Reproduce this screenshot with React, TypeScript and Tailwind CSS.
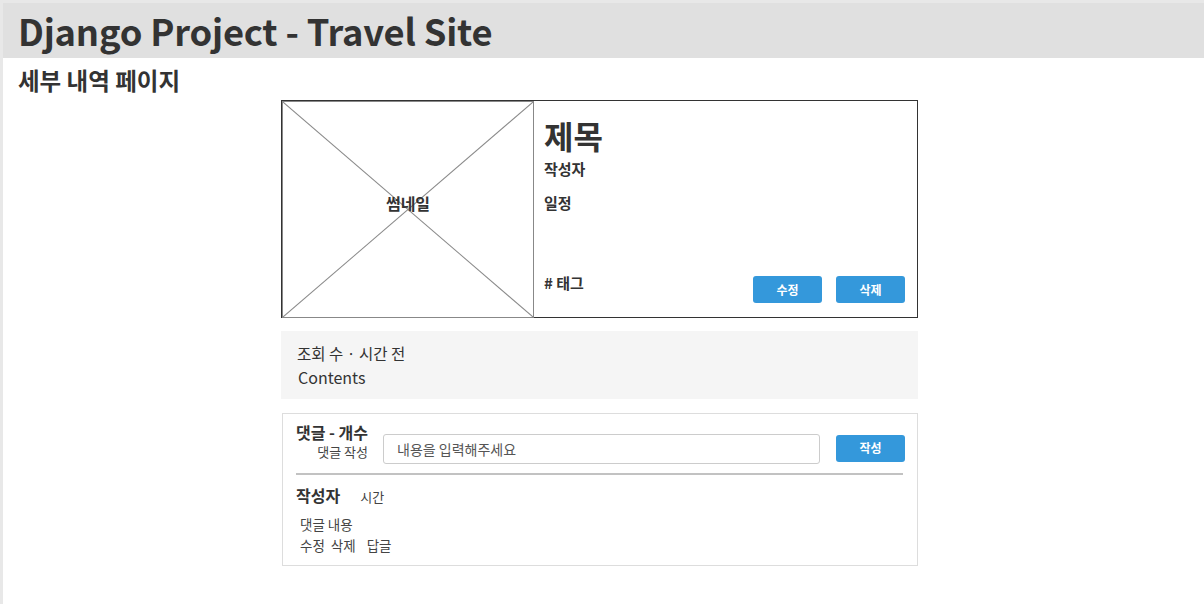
import React from "react"

const font = { fontFamily: '"Noto Sans CJK KR", "Noto Sans", sans-serif' }

const Thumbnail = () => {
	return (
		<div className="relative w-[252px] h-[217px] border border-[#888] flex items-center justify-center shrink-0">
			<svg className="absolute inset-0" width="100%" height="100%" preserveAspectRatio="none" viewBox="0 0 100 100">
				<line x1="0" y1="0" x2="100" y2="100" stroke="#8a8a8a" strokeWidth="1" vectorEffect="non-scaling-stroke" />
				<line x1="100" y1="0" x2="0" y2="100" stroke="#8a8a8a" strokeWidth="1" vectorEffect="non-scaling-stroke" />
			</svg>
			<span className="relative text-[16px] font-bold text-[#333] mb-[14px]">썸네일</span>
		</div>
	)
}

const BlueButton = ({ label }: { label: string }) => {
	return (
		<button className="w-[69px] h-[27px] rounded-[3px] bg-[#3498db] text-white text-[12px] font-bold leading-none">
			{label}
		</button>
	)
}

export default function App() {
	return (
		<div style={font} className="min-h-[604px] bg-[#e8e8e8] pl-[3px] pt-[3px] text-[#333]">
			<div className="bg-white min-h-[601px]">
				<div className="bg-[#e0e0e0] h-[55px] flex items-center pl-[15px]">
					<h1 className="text-[36.3px] font-bold leading-none tracking-[-0.2px]">Django Project - Travel Site</h1>
				</div>
				<h2 className="pl-[15px] pt-[7px] text-[23.5px] font-bold leading-[30px]">세부 내역 페이지</h2>

				<div className="w-[637px] ml-[278px] mt-[5px]">
					<div className="flex border border-[#333] h-[218px]">
						<Thumbnail />
						<div className="flex-1 flex flex-col pl-[10px] pr-[12px] pt-[14px] pb-[14px]">
							<div className="text-[32px] font-bold leading-[40px]">제목</div>
							<div className="text-[15px] font-bold mt-[4px] leading-[20px]">작성자</div>
							<div className="text-[15px] font-bold mt-[14px] leading-[20px]">일정</div>
							<div className="mt-auto flex items-end justify-between">
								<div className="text-[15px] font-bold leading-[20px] mb-[10px]">
									# 태그
								</div>
								<div className="flex gap-[14px]">
									<BlueButton label="수정" />
									<BlueButton label="삭제" />
								</div>
							</div>
						</div>
					</div>

					<div className="mt-[13px] h-[68px] bg-[#f5f5f5] pl-[16px] pt-[11px]">
						<div className="text-[15.5px] leading-[22px]">조회 수 · 시간 전</div>
						<div className="text-[16px] leading-[24px] mt-[1px] pl-[1px]">Contents</div>
					</div>

					<div className="mt-[14px] ml-[1px] border border-[#ddd] h-[153px] px-[13px] pt-[9px]">
						<div className="flex items-start">
							<div className="flex flex-col items-end w-[74px]">
								<div className="text-[16px] font-bold leading-[19px] self-start whitespace-nowrap">댓글 - 개수</div>
								<div className="text-[13px] leading-[16px] mt-[2px] text-[#444] mr-[2px]">댓글 작성</div>
							</div>
							<div className="ml-[13px] mt-[11px] w-[437px] h-[30px] border border-[#ccc] rounded-[3px] flex items-center pl-[13px]">
								<span className="text-[14px] text-[#555]">내용을 입력해주세요</span>
							</div>
							<div className="ml-auto mt-[11px] mr-[-1px]">
								<BlueButton label="작성" />
							</div>
						</div>
						<div className="mt-[9px] h-[2px] bg-[#c2c2c2] mr-[1px]" />
						<div className="flex items-baseline mt-[10px]">
							<span className="text-[16px] font-bold leading-[20px]">작성자</span>
							<span className="text-[13px] ml-[20px] text-[#444]">시간</span>
						</div>
						<div className="pl-[4px] mt-[7px] text-[13.5px] leading-[21px] text-[#444]">
							<div>댓글 내용</div>
							<div className="flex">
								<span>수정</span>
								<span className="ml-[6px]">삭제</span>
								<span className="ml-[11px]">답글</span>
							</div>
						</div>
					</div>
				</div>
			</div>
		</div>
	)
}
